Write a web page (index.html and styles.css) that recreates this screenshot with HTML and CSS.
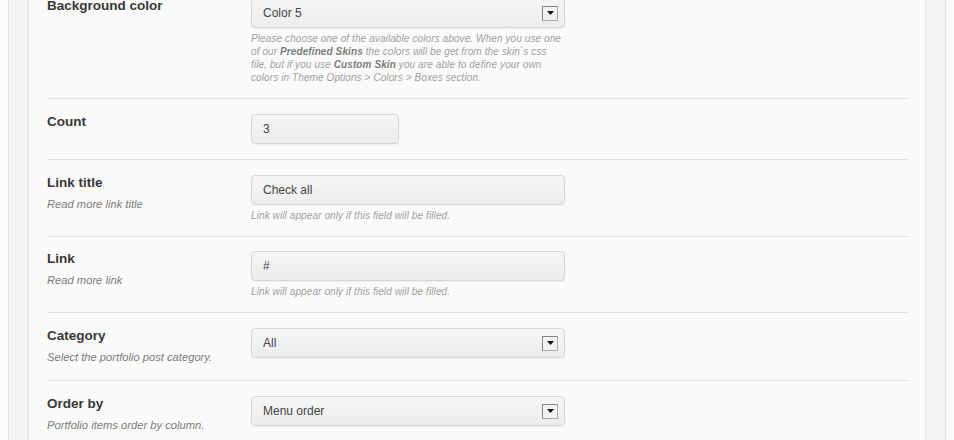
FILE: index.html
```html
<!DOCTYPE html>
<html>
<head>
<meta charset="utf-8">
<link rel="stylesheet" href="styles.css">
</head>
<body>
<div class="outer">
  <div class="panel">
    <div class="row">
      <div class="label-col">
        <div class="label">Background color</div>
      </div>
      <div class="field-col">
        <div class="control select">
          <span class="value">Color 5</span>
          <span class="arrow"><svg width="7" height="4" viewBox="0 0 7 4"><path d="M0 0H7L3.5 4Z" fill="#111"/></svg></span>
        </div>
        <div class="help">Please choose one of the available colors above. When you use one<br>of our <b>Predefined Skins</b> the colors will be get from the skin`s css<br>file, but if you use <b>Custom Skin</b> you are able to define your own<br>colors in Theme Options &gt; Colors &gt; Boxes section.</div>
      </div>
    </div>
    <div class="row">
      <div class="label-col">
        <div class="label">Count</div>
      </div>
      <div class="field-col">
        <div class="control short"><span class="value">3</span></div>
      </div>
    </div>
    <div class="row">
      <div class="label-col">
        <div class="label">Link title</div>
        <div class="desc">Read more link title</div>
      </div>
      <div class="field-col">
        <div class="control"><span class="value">Check all</span></div>
        <div class="help">Link will appear only if this field will be filled.</div>
      </div>
    </div>
    <div class="row row-tight">
      <div class="label-col">
        <div class="label">Link</div>
        <div class="desc">Read more link</div>
      </div>
      <div class="field-col">
        <div class="control"><span class="value">#</span></div>
        <div class="help">Link will appear only if this field will be filled.</div>
      </div>
    </div>
    <div class="row">
      <div class="label-col">
        <div class="label">Category</div>
        <div class="desc">Select the portfolio post category.</div>
      </div>
      <div class="field-col">
        <div class="control select">
          <span class="value">All</span>
          <span class="arrow"><svg width="7" height="4" viewBox="0 0 7 4"><path d="M0 0H7L3.5 4Z" fill="#111"/></svg></span>
        </div>
      </div>
    </div>
    <div class="row">
      <div class="label-col">
        <div class="label">Order by</div>
        <div class="desc">Portfolio items order by column.</div>
      </div>
      <div class="field-col">
        <div class="control select">
          <span class="value">Menu order</span>
          <span class="arrow"><svg width="7" height="4" viewBox="0 0 7 4"><path d="M0 0H7L3.5 4Z" fill="#111"/></svg></span>
        </div>
      </div>
    </div>
  </div>
</div>
</body>
</html>
```

FILE: styles.css
```css
html, body {
  margin: 0;
  padding: 0;
  background: #fbfbfb;
  font-family: "Liberation Sans", Arial, sans-serif;
}

.outer {
  margin: -17px 8px 0 8px;
  border: 1px solid #e3e3e3;
  border-top: none;
  background: #f3f3f3;
  padding: 0 19px;
  height: 520px;
}

.panel {
  border: 1px solid #e3e3e3;
  border-top: none;
  background: #fafafa;
  padding: 0 16px 0 18px;
  height: 100%;
}

.row {
  display: flex;
  padding: 15px 0;
  border-bottom: 1px solid #e4e4e4;
}

.row-tight {
  padding: 14px 0 15px;
}

.label-col {
  width: 204px;
  flex: none;
}

.label {
  font-size: 13.5px;
  font-weight: bold;
  line-height: 16px;
  color: #383838;
}

.desc {
  margin-top: 6px;
  font-size: 11.2px;
  font-style: italic;
  line-height: 15px;
  color: #7a7a7a;
}

.field-col {
  flex: 1;
}

.control {
  box-sizing: border-box;
  width: 314px;
  height: 30px;
  border: 1px solid #d6d6d6;
  border-radius: 4px;
  background: linear-gradient(to bottom, #f6f6f6, #ececec);
  box-shadow: 0 1px 1px rgba(0, 0, 0, 0.05);
  display: flex;
  align-items: center;
  justify-content: space-between;
  padding: 0 6px 0 11px;
  font-size: 12px;
  color: #444;
}

.control.short {
  width: 148px;
}

.arrow {
  box-sizing: border-box;
  width: 16px;
  height: 15px;
  border: 1px solid #858585;
  border-right-color: #a8a8a8;
  border-bottom-color: #a8a8a8;
  background: #f2f2f2;
  display: flex;
  align-items: center;
  justify-content: center;
}

.arrow svg {
  display: block;
}

.help {
  margin: 4px 0 -1px 0;
  font-size: 10px;
  font-style: italic;
  line-height: 13px;
  letter-spacing: 0.1px;
  color: #a0a0a0;
}

.help b {
  color: #7c7c7c;
}
```
